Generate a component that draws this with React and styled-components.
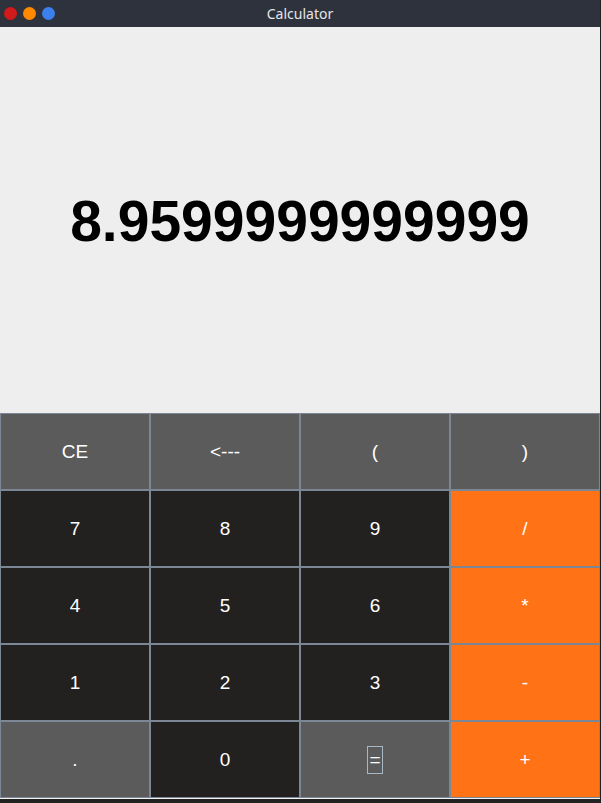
import styled, { createGlobalStyle } from "styled-components";

const GlobalStyle = createGlobalStyle`
  html, body {
    margin: 0;
    padding: 0;
    background: #222222;
  }
  * {
    box-sizing: border-box;
  }
`;

const Window = styled.div`
  width: 600px;
  height: 803px;
  display: flex;
  flex-direction: column;
  font-family: "Liberation Sans", Arial, sans-serif;
  background: #222222;
`;

const TitleBar = styled.div`
  height: 27px;
  background: #2e323c;
  display: flex;
  align-items: center;
  position: relative;
  padding-left: 4px;
  gap: 6px;
`;

const Light = styled.span`
  width: 13px;
  height: 13px;
  border-radius: 50%;
  background: ${(p) => p.color};
`;

const Title = styled.span`
  position: absolute;
  left: 0;
  right: 0;
  text-align: center;
  font-family: "Noto Sans", "DejaVu Sans", sans-serif;
  font-size: 14px;
  color: #e4e6ea;
  pointer-events: none;
`;

const Display = styled.div`
  height: 386px;
  background: #eeeeee;
  display: flex;
  align-items: center;
  justify-content: center;
  font-size: 57px;
  font-weight: 700;
  color: #000000;
  padding-top: 2px;
`;

const Keypad = styled.div`
  display: grid;
  grid-template-columns: repeat(4, 150px);
  grid-auto-rows: 77px;
`;

const colors = {
  gray: "#5b5b5b",
  dark: "#222120",
  orange: "#ff7316",
};

const Key = styled.button`
  border: 1px solid #7b8794;
  background: ${(p) => colors[p.kind]};
  color: #ffffff;
  font-family: "Liberation Sans", Arial, sans-serif;
  font-size: 19px;
  display: flex;
  align-items: center;
  justify-content: center;
  padding: 0;
  cursor: pointer;
`;

const Focus = styled.span`
  display: inline-flex;
  align-items: center;
  justify-content: center;
  width: 14px;
  height: 26px;
  outline: 1px solid #a9b6c4;
`;

const Footer = styled.div`
  height: 5px;
  border-top: 1px solid #f2f2f2;
  background: #222222;
`;

const keys = [
  ["CE", "gray"], ["<---", "gray"], ["(", "gray"], [")", "gray"],
  ["7", "dark"], ["8", "dark"], ["9", "dark"], ["/", "orange"],
  ["4", "dark"], ["5", "dark"], ["6", "dark"], ["*", "orange"],
  ["1", "dark"], ["2", "dark"], ["3", "dark"], ["-", "orange"],
  [".", "gray"], ["0", "dark"], ["=", "gray"], ["+", "orange"],
];

function App() {
  return (
    <>
      <GlobalStyle />
      <Window>
        <TitleBar>
          <Light color="#d11a1a" />
          <Light color="#ff8a00" />
          <Light color="#3b80ec" />
          <Title>Calculator</Title>
        </TitleBar>
        <Display>8.9599999999999</Display>
        <Keypad>
          {keys.map(([label, kind]) => (
            <Key key={label} kind={kind}>
              {label === "=" ? <Focus>{label}</Focus> : label}
            </Key>
          ))}
        </Keypad>
        <Footer />
      </Window>
    </>
  );
}

export default App;
